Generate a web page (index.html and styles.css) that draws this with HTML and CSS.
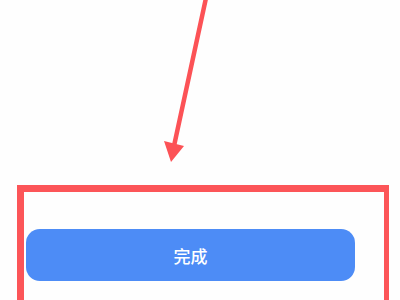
FILE: index.html
```html
<!DOCTYPE html>
<html lang="zh-CN">
<head>
    <meta charset="UTF-8">
    <meta name="viewport" content="width=device-width, initial-scale=1.0">
    <title>完成</title>
    <link rel="stylesheet" href="styles.css">
</head>
<body>
    <!-- 指示箭頭 -->
    <svg class="arrow" width="400" height="185" viewBox="0 0 400 185">
        <line x1="206" y1="-2" x2="174" y2="146" stroke="#fc5256" stroke-width="4.5" stroke-linecap="round"/>
        <polygon points="164,141 184,146 171,162" fill="#fc5256"/>
    </svg>

    <div class="highlight">
        <button class="done-btn">完成</button>
    </div>
</body>
</html>
```

FILE: styles.css
```css
body {
    margin: 0;
    width: 400px;
    height: 300px;
    overflow: hidden;
    background-color: #fefefe;
    font-family: "Noto Sans CJK SC", "Noto Sans", sans-serif;
}
.arrow {
    display: block;
}
.highlight {
    margin-left: 17px;
    width: 358px;
    height: 71px;
    border: solid #fc5558;
    border-width: 7px 5px 0 7px;
    padding: 37px 0 0 2px;
    box-sizing: content-box;
}
.done-btn {
    display: block;
    width: 329px;
    height: 52px;
    border: none;
    border-radius: 14px;
    background-color: #4d8cf6;
    color: #ffffff;
    font-size: 17px;
    font-weight: 500;
    font-family: "Noto Sans CJK SC", "Noto Sans", sans-serif;
    cursor: pointer;
}
```
